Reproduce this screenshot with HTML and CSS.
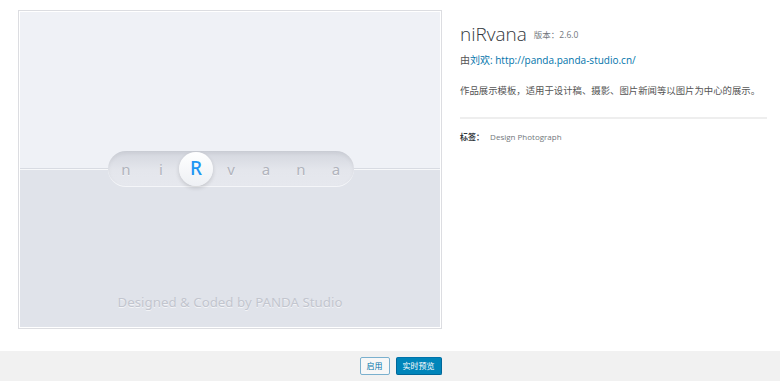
FILE: index.html
```html
<!DOCTYPE html>
<html lang="zh-CN">
<head>
    <meta charset="UTF-8">
    <meta name="viewport" content="width=device-width, initial-scale=1.0">
    <title>niRvana 主题详情</title>
    <link rel="stylesheet" href="styles.css">
</head>
<body>
    <div class="theme-about">
        <div class="screenshot">
            <div class="shot">
                <div class="shot-top"></div>
                <div class="shot-bottom">
                    <p class="credit">Designed &amp; Coded by PANDA Studio</p>
                </div>
                <div class="logo-pill">
                    <span>n</span>
                    <span>i</span>
                    <span class="active">R</span>
                    <span>v</span>
                    <span>a</span>
                    <span>n</span>
                    <span>a</span>
                </div>
            </div>
        </div>

        <div class="theme-info">
            <h2 class="theme-name">niRvana <span class="theme-version">版本：2.6.0</span></h2>
            <p class="theme-author">由<a href="#">刘欢: http://panda.panda-studio.cn/</a></p>
            <p class="theme-description">作品展示模板，适用于设计稿、摄影、图片新闻等以图片为中心的展示。</p>
            <p class="theme-tags"><span>标签：</span> Design Photograph</p>
        </div>
    </div>

    <div class="theme-actions">
        <button class="button">启用</button>
        <button class="button button-primary">实时预览</button>
    </div>
</body>
</html>
```

FILE: styles.css
```css
html, body {
    height: 100%;
}
body {
    margin: 0;
    font-family: "Open Sans", "Noto Sans CJK SC", sans-serif;
    color: #444;
    background-color: #fff;
    display: flex;
    flex-direction: column;
}
.theme-about {
    flex: 1;
    display: flex;
    gap: 18px;
    padding: 10px 13px 0 18px;
}
.screenshot {
    width: 420px;
    height: 315px;
    border: 1px solid #fff;
    box-shadow: 0 0 0 1px #dcdde1;
    flex-shrink: 0;
    margin: 1px;
}
.shot {
    position: relative;
    height: 100%;
    display: flex;
    flex-direction: column;
}
.shot-top {
    height: 156px;
    background-color: #eff1f6;
    border-bottom: 1px solid #d8dbe2;
}
.shot-bottom {
    flex: 1;
    background-color: #e0e3ea;
    border-top: 1px solid #f7f8fa;
    display: flex;
    align-items: flex-end;
    justify-content: center;
}
.credit {
    margin: 0 0 16px;
    font-family: "Noto Sans", sans-serif;
    font-size: 13.3px;
    color: #c2c5ce;
    text-shadow: 0 1px 0 #f3f4f7;
}
.logo-pill {
    position: absolute;
    left: 88px;
    top: 139px;
    width: 246px;
    height: 36px;
    border-radius: 19px;
    border-bottom: 1px solid #f5f6f9;
    background: linear-gradient(#d3d6de, #e4e6ec 55%, #e6e8ee);
    box-shadow: inset 0 2px 4px rgba(0, 0, 0, 0.06);
    display: flex;
    align-items: center;
    justify-content: space-between;
    padding: 0 1px;
    box-sizing: border-box;
}
.logo-pill span {
    width: 34px;
    text-align: center;
    font-family: "Noto Sans", sans-serif;
    font-size: 15px;
    color: #b0b3bc;
    text-shadow: 0 1px 0 #f4f5f8;
}
.logo-pill .active {
    height: 34px;
    line-height: 33px;
    border-radius: 50%;
    background: linear-gradient(#ffffff, #eef0f4);
    box-shadow: 0 2px 4px rgba(0, 0, 0, 0.15);
    color: #2196f3;
    font-size: 19px;
    font-weight: 500;
    text-shadow: none;
}
.theme-info {
    flex: 1;
    padding-top: 10px;
}
.theme-name {
    margin: 0 0 4px;
    font-size: 19px;
    font-weight: 300;
    color: #32373c;
    line-height: 28px;
}
.theme-version {
    font-size: 8.5px;
    font-weight: 400;
    color: #72777c;
    margin-left: 2px;
    vertical-align: 3px;
}
.theme-author {
    margin: 0;
    font-size: 10px;
    line-height: 14px;
    color: #555;
}
.theme-author a {
    color: #0073aa;
    text-decoration: none;
}
.theme-description {
    margin: 17px 0 0;
    font-size: 9.4px;
    line-height: 14px;
    color: #555;
    white-space: nowrap;
    padding-bottom: 19px;
    border-bottom: 2px solid #eee;
}
.theme-tags {
    margin: 12px 0 0;
    font-size: 8px;
    line-height: 12px;
    color: #72777c;
}
.theme-tags span {
    font-weight: 700;
    color: #32373c;
    margin-right: 4px;
}
.theme-actions {
    height: 30px;
    background-color: #f1f1f1;
    display: flex;
    align-items: center;
    justify-content: center;
    gap: 6px;
    padding-left: 21px;
}
.button {
    height: 18px;
    padding: 0 6px;
    font-family: "Open Sans", "Noto Sans CJK SC", sans-serif;
    font-size: 8px;
    line-height: 16px;
    color: #0073aa;
    background-color: #f7f7f7;
    border: 1px solid #7ab0ce;
    border-radius: 2px;
    cursor: pointer;
}
.button-primary {
    color: #fff;
    background-color: #0085ba;
    border-color: #0073aa #006799 #006799;
}
```
